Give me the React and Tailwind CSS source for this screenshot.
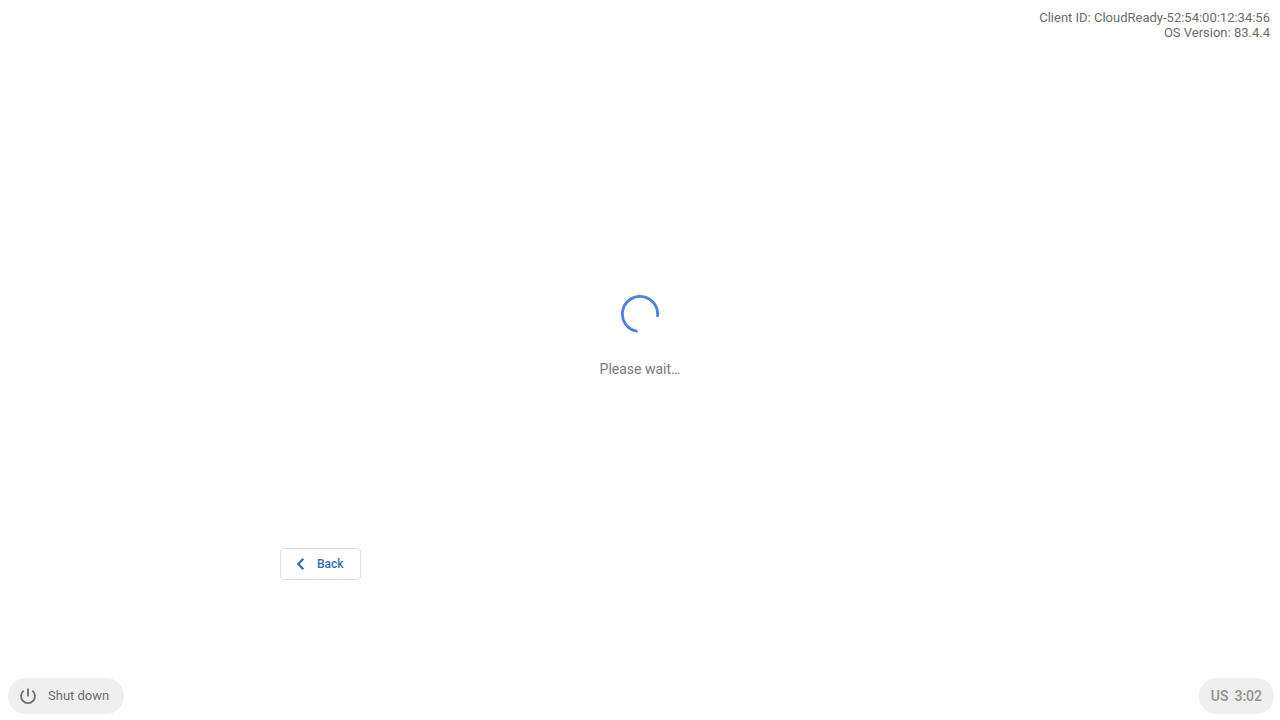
const device = {
  clientId: 'CloudReady-52:54:00:12:34:56',
  osVersion: '83.4.4',
};

function Spinner() {
  return (
    <svg className="h-10 w-10" viewBox="0 0 40 40" fill="none" aria-hidden="true">
      <path
        d="M16.4 37.2A17.6 17.6 0 1 1 37.5 21.8"
        stroke="#4f80dc"
        strokeWidth="2.8"
        strokeLinecap="round"
      />
    </svg>
  );
}

function BackIcon() {
  return (
    <svg className="h-5 w-5" viewBox="0 0 20 20" fill="none" aria-hidden="true">
      <path d="M12.4 4.8L7.2 10L12.4 15.2" stroke="#2b70b8" strokeWidth="2.2" />
    </svg>
  );
}

function PowerIcon() {
  return (
    <svg className="h-5 w-5" viewBox="0 0 20 20" fill="none" aria-hidden="true">
      <path
        d="M10 2.5V10.5M5.6 4.6A7 7 0 1 0 14.4 4.6"
        stroke="#6c6c6c"
        strokeWidth="1.8"
      />
    </svg>
  );
}

function App() {
  return (
    <div className="flex min-h-screen flex-col bg-[#fefefe] font-['Roboto',sans-serif]">
      <header className="px-[10px] pt-[10px] text-right text-[13px] leading-[15px] text-[#6c6c6c]">
        <p>Client ID: {device.clientId}</p>
        <p>OS Version: {device.osVersion}</p>
      </header>

      <main className="mx-auto flex w-full max-w-[720px] flex-1 flex-col pb-[98px]">
        <div
          role="status"
          className="flex flex-1 flex-col items-center justify-center gap-[25px] pt-[84px]"
        >
          <Spinner />
          <p className="text-sm leading-5 text-[#7a7a7a]">Please wait…</p>
        </div>
        <button
          type="button"
          className="flex h-8 items-center gap-[6px] self-start rounded border border-[#dadce0] bg-white pr-4 pl-[10px] text-xs font-medium text-[#2b70b8]"
        >
          <BackIcon />
          Back
        </button>
      </main>

      <footer className="flex items-center justify-between pr-[6px] pb-[6px] pl-2">
        <button
          type="button"
          className="flex h-9 items-center gap-[10px] rounded-full bg-[#efefef] pr-[15px] pl-[10px] text-[13px] text-[#6c6c6c]"
        >
          <PowerIcon />
          Shut down
        </button>
        <button
          type="button"
          className="flex h-9 items-center gap-[6px] rounded-full bg-[#efefef] px-3 text-sm font-medium text-[#909090]"
        >
          <span>US</span>
          <span>3:02</span>
        </button>
      </footer>
    </div>
  );
}

export default App;
